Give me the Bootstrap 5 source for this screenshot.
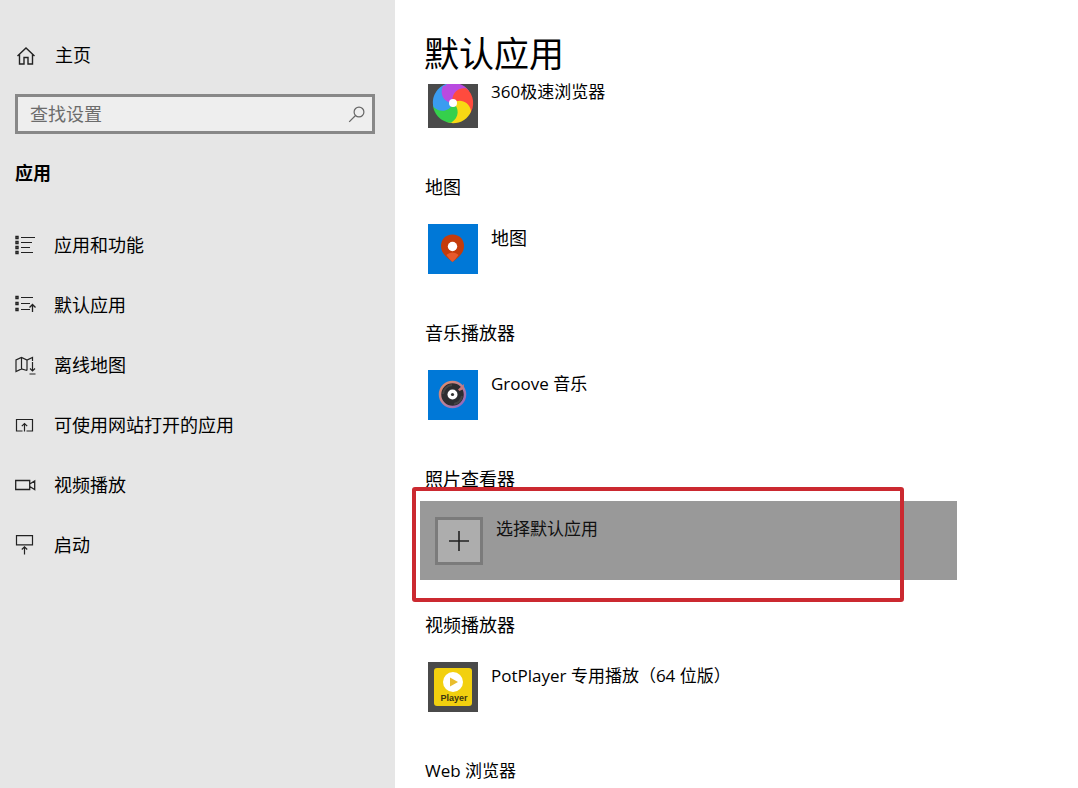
<!DOCTYPE html>
<html lang="zh-CN">
<head>
<meta charset="utf-8">
<meta name="viewport" content="width=device-width, initial-scale=1">
<title>默认应用</title>
<link href="https://cdn.jsdelivr.net/npm/bootstrap@5.3.0/dist/css/bootstrap.min.css" rel="stylesheet">
<style>
  body { font-family: "Open Sans", "Noto Sans CJK SC", sans-serif; font-size: 18px; line-height: 24px; color: #000; background: #fff; }
  .latin-text { font-size: 17px; }
  .side-pane { width: 395px; background: #e6e6e6; padding: 40px 20px 0 15px; }
  .side-link { color: #000; text-decoration: none; height: 60px; gap: 18px; }
  .side-link svg, .home-link svg { width: 21px; height: 21px; flex: none; }
  .home-link { color: #000; text-decoration: none; gap: 19px; height: 30px; }
  .search-field { margin-top: 24px; }
  .search-field input { height: 40px; border: 3px solid #888; border-radius: 0; background: #eee; color: #666; font-size: 18px; line-height: 24px; padding: 4px 40px 4px 12px; }
  .search-field input::placeholder { color: #6c6c6c; opacity: 1; }
  .search-field svg { position: absolute; right: 10px; top: 12px; width: 17px; height: 17px; }
  .side-title { font-size: 18px; line-height: 24px; margin: 27px 0 30px; }
  .page-title { font-size: 35px; line-height: 48px; font-weight: 400; margin: 0; padding: 30px 0 2px 29px; }
  .app-scroll { padding-left: 30px; padding-right: 120px; }
  .app-group { height: 146px; }
  .app-group.partial { height: 95px; }
  .app-group h2 { font-size: 18px; line-height: 24px; font-weight: 400; margin: 0; }
  .app-group h2.latin-text { font-size: 17px; }
  .app-btn { border: 0; background: none; padding: 0 0 0 3px; gap: 13px; color: #000; text-align: left; }
  h2 + .app-btn { margin-top: 25px; }
  .app-btn svg { width: 50px; height: 50px; flex: none; }
  .partial .app-btn svg { height: 44px; margin-top: 4px; }
  h2 + .app-btn span { padding-top: 2px; }
  .picked { margin: 10px 0 0 -5px; max-width: 537px; }
  .picked button { background: #999; border: 0; width: 100%; height: 79px; padding: 16px 15px; gap: 13px; font-size: 17px; color: #111; text-align: left; }
  .plus-box { width: 48px; height: 48px; border: 3px solid #7b7b7b; background: #adadad; }
  .highlight-frame { position: absolute; left: -8px; right: 53px; top: -14px; bottom: -22px; border: 4px solid #cb2930; border-radius: 3px; pointer-events: none; }
</style>
</head>
<body>
<div class="d-flex vh-100 overflow-hidden">
  <aside class="side-pane flex-shrink-0">
    <a href="#" class="home-link d-flex align-items-center">
      <svg viewBox="0 0 21 21" fill="none" stroke="#222" stroke-width="1.4"><path d="M2.500 11 11 3l8.500 8M4.500 9.500V19H9v-6.500h4V19h4.500V9.500"/></svg>
      <span>主页</span>
    </a>
    <div class="search-field position-relative">
      <input type="text" class="form-control shadow-none" placeholder="查找设置" aria-label="查找设置">
      <svg viewBox="0 0 17 17" fill="none" stroke="#666" stroke-width="1.200"><circle cx="11" cy="6" r="4.900"/><path d="M7.500 9.500 1.200 15.800"/></svg>
    </div>
    <h2 class="side-title fw-bold">应用</h2>
    <nav>
      <a href="#" class="side-link d-flex align-items-center">
        <svg viewBox="0 0 21 21" fill="none" stroke="#222"><path d="M1 1.500h2v2H1zM1 6.500h2v2H1zM1 11.500h2v2H1zM1 16.500h2v2H1z" stroke-width="1.400"/><path d="M6 2.500h14M6 7.500h11M6 12.500h9M6 17.500h12"/></svg>
        <span>应用和功能</span></a>
      <a href="#" class="side-link d-flex align-items-center">
        <svg viewBox="0 0 21 21" fill="none" stroke="#222"><path d="M1 1.500h2v2H1zM1 7.500h2v2H1zM1 13.500h2v2H1z" stroke-width="1.400"/><path d="M6 2.500h12M6 8.500h9M6 14.500h9"/><path d="M17.500 17V9.500M14.500 12.500l3-3 3 3" stroke-width="1.300"/></svg>
        <span>默认应用</span></a>
      <a href="#" class="side-link d-flex align-items-center">
        <svg viewBox="0 0 21 21" fill="none" stroke="#222" stroke-width="1.200"><path d="M12 15.500 6.500 14 1 16.500V5L6.500 2.500 12 5l5.500-2.500V6M6.500 2.500V14M12 5v10.500M17.500 7v9M15 13.500l2.500 2.500 2.500-2.500M14.500 19h6"/></svg>
        <span>离线地图</span></a>
      <a href="#" class="side-link d-flex align-items-center">
        <svg viewBox="0 0 21 21" fill="none" stroke="#222" stroke-width="1.200"><path d="M7.500 16H1.500V4.500h16V16h-6M9.500 16.500V8.500M6.800 11.200 9.500 8.500l2.700 2.700"/></svg>
        <span>可使用网站打开的应用</span></a>
      <a href="#" class="side-link d-flex align-items-center">
        <svg viewBox="0 0 21 21" fill="none" stroke="#222" stroke-width="1.300"><path d="M.700 5.500h14v9H.700zM14.700 9l5-3v8.500l-5-3"/></svg>
        <span>视频播放</span></a>
      <a href="#" class="side-link d-flex align-items-center">
        <svg viewBox="0 0 21 21" fill="none" stroke="#222" stroke-width="1.200"><path d="M1.500.600h16v9.200h-16zM9.500 19.500V12M6.800 14.500l2.700-2.700 2.700 2.700"/></svg>
        <span>启动</span></a>
    </nav>
  </aside>

  <main class="d-flex flex-column flex-grow-1">
    <h1 class="page-title">默认应用</h1>
    <div class="app-scroll flex-grow-1 overflow-hidden">
      <section class="app-group partial">
        <button type="button" class="app-btn d-flex align-items-start">
          <svg viewBox="0 6 50 44"><path fill="#4a4a4a" d="M0 0h50v50H0z"/>
            <g transform="translate(25 25)">
              <circle r="13" fill="#f8d914"/>
              <path fill="#b94be0" d="M0 0C-8 0-14-8-10-17-2-23 11-20 16-12 8-12 1-8 0 0z"/>
              <path fill="#ff4b3e" transform="rotate(72)" d="M0 0C-8 0-14-8-10-17-2-23 11-20 16-12 8-12 1-8 0 0z"/>
              <path fill="#f8d914" transform="rotate(144)" d="M0 0C-8 0-14-8-10-17-2-23 11-20 16-12 8-12 1-8 0 0z"/>
              <path fill="#35d04c" transform="rotate(216)" d="M0 0C-8 0-14-8-10-17-2-23 11-20 16-12 8-12 1-8 0 0z"/>
              <path fill="#3a9cf0" transform="rotate(288)" d="M0 0C-8 0-14-8-10-17-2-23 11-20 16-12 8-12 1-8 0 0z"/>
              <path fill="#b94be0" d="M0 0C-8 0-14-8-10-17L3-19C-3-13-3-6 0 0z"/>
              <circle r="4" fill="#fff"/>
            </g></svg>
          <span class="latin-text">360极速浏览器</span>
        </button>
      </section>

      <section class="app-group">
        <h2>地图</h2>
        <button type="button" class="app-btn d-flex align-items-start">
          <svg viewBox="0 0 50 50"><path fill="#0078d7" d="M0 0h50v50H0z"/><path fill="#c43c0c" d="M24.500 10.500c7 0 11.500 5 11.500 11.500 0 7-5 11-11.500 16C18 33 13 29 13 22c0-6.500 4.500-11.500 11.500-11.500z"/><path fill="#e8592b" d="M18.500 31c3-3.500 9-3.500 12 0-1.500 2.500-4 5-6 7-2-2-4.500-4.500-6-7z"/><circle cx="24.500" cy="22.500" r="4.700" fill="#fff"/></svg>
          <span>地图</span>
        </button>
      </section>

      <section class="app-group">
        <h2>音乐播放器</h2>
        <button type="button" class="app-btn d-flex align-items-start">
          <svg viewBox="0 0 50 50"><defs><linearGradient id="ring" x1="0" y1="0" x2="1" y2="1"><stop offset="0" stop-color="#e58a62"/><stop offset=".5" stop-color="#b98298"/><stop offset="1" stop-color="#8b62c5"/></linearGradient></defs><path fill="#0078d7" d="M0 0h50v50H0z"/><circle cx="24.500" cy="24.500" r="12.500" fill="#2d2d30" stroke="url(#ring)" stroke-width="2.500"/><path d="M15 24a10 10 0 0 1 9-9M34 26a10 10 0 0 1-8 8" fill="none" stroke="#444" stroke-width="2"/><path d="M30 19.500 36 14l-.5 5-4 2z" fill="#c9797c"/><circle cx="24.500" cy="24.500" r="5" fill="#fff"/><circle cx="24.500" cy="24.500" r="1.600" fill="#333"/></svg>
          <span class="latin-text">Groove 音乐</span>
        </button>
      </section>

      <section class="app-group">
        <h2>照片查看器</h2>
        <div class="picked position-relative">
          <button type="button" class="d-flex align-items-start">
            <span class="plus-box d-flex align-items-center justify-content-center flex-shrink-0">
              <svg width="20" height="20" viewBox="0 0 20 20" stroke="#222" stroke-width="1.600"><path d="M10 0v20M0 10h20"/></svg>
            </span>
            <span>选择默认应用</span>
          </button>
          <div class="highlight-frame"></div>
        </div>
      </section>

      <section class="app-group">
        <h2>视频播放器</h2>
        <button type="button" class="app-btn d-flex align-items-start">
          <svg viewBox="0 0 50 50"><path fill="#4a4a4a" d="M0 0h50v50H0z"/><rect x="6" y="6" width="38" height="38" rx="3" fill="#f2d00f"/><circle cx="25" cy="20" r="10" fill="#fff"/><path fill="#e9bd2e" d="m22 15.500 8 4.500-8 4.500z"/><text x="26" y="39" font-family="Liberation Sans, sans-serif" font-weight="700" font-size="9" text-anchor="middle" fill="#3d3510">Player</text></svg>
          <span class="latin-text">PotPlayer 专用播放（64 位版）</span>
        </button>
      </section>

      <section class="app-group">
        <h2 class="latin-text">Web 浏览器</h2>
      </section>
    </div>
  </main>
</div>
<script src="https://cdn.jsdelivr.net/npm/bootstrap@5.3.0/dist/js/bootstrap.bundle.min.js"></script>
</body>
</html>
